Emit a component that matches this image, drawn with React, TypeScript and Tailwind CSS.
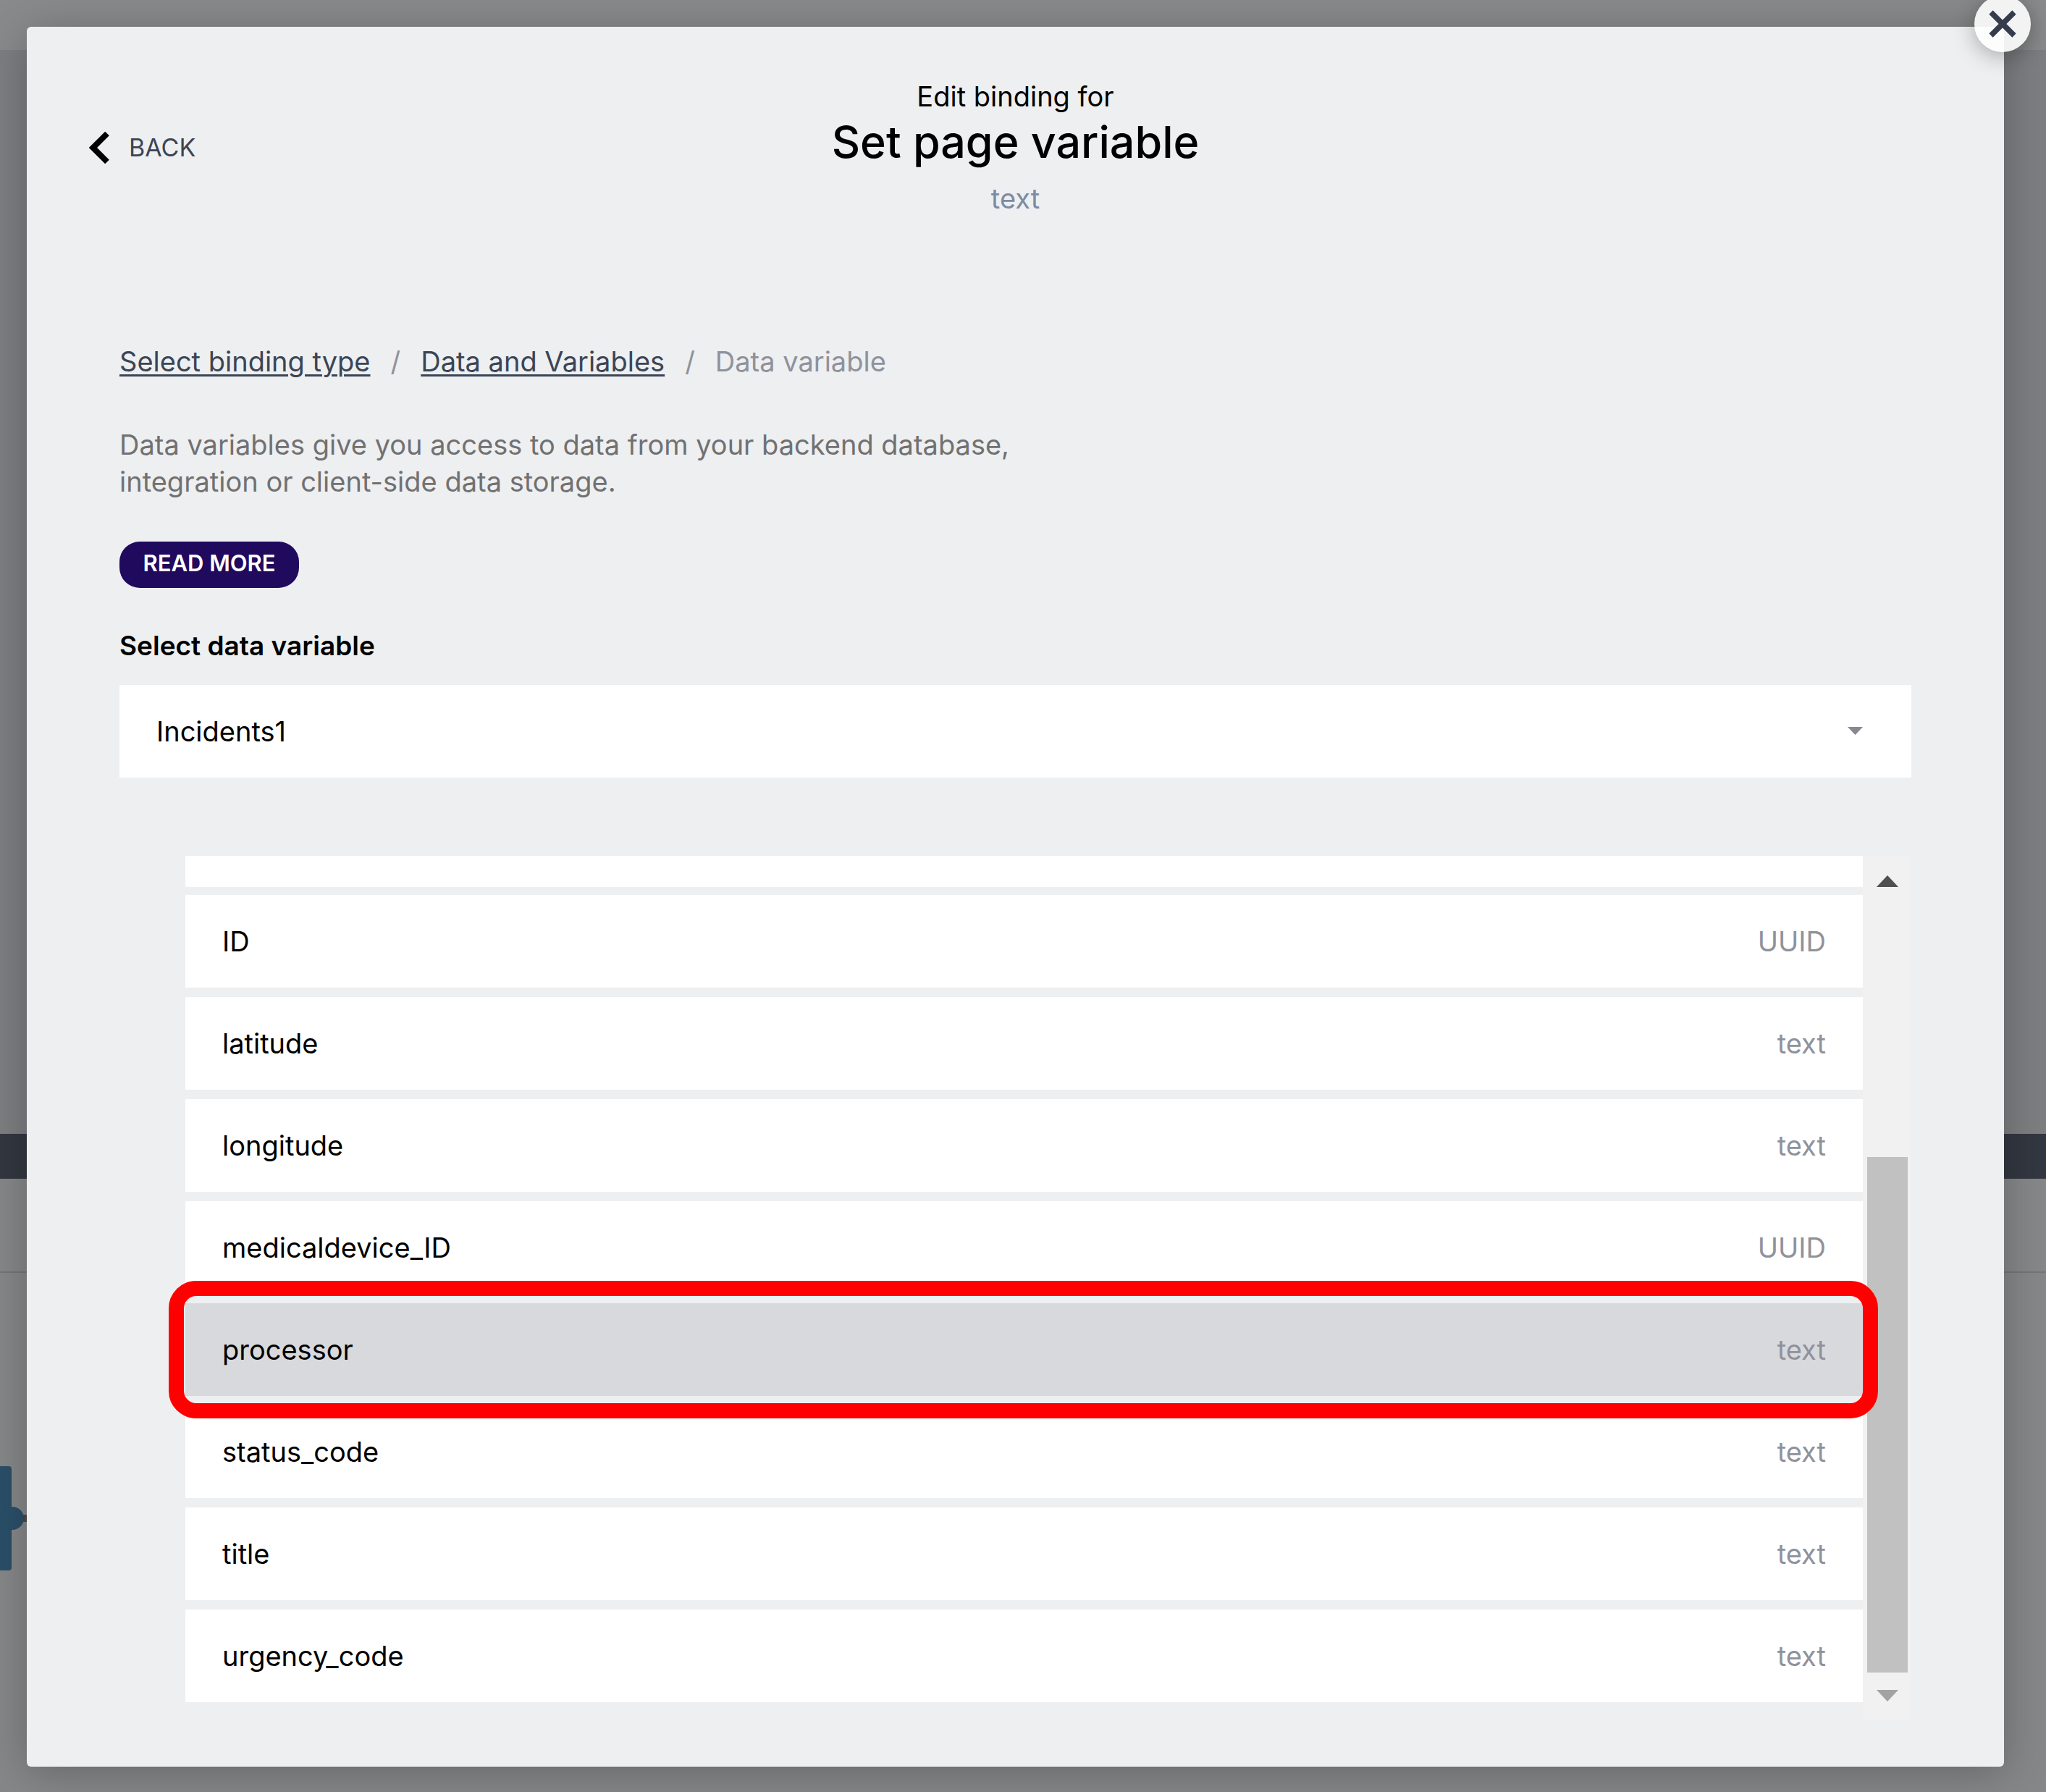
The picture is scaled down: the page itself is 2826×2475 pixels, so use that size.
type Field = { name: string; type: string; highlighted?: boolean };

const fields: Field[] = [
  { name: "ID", type: "UUID" },
  { name: "latitude", type: "text" },
  { name: "longitude", type: "text" },
  { name: "medicaldevice_ID", type: "UUID" },
  { name: "processor", type: "text", highlighted: true },
  { name: "status_code", type: "text" },
  { name: "title", type: "text" },
  { name: "urgency_code", type: "text" },
];

function Backdrop() {
  return (
    <div className="absolute inset-0 flex flex-col bg-[#868788]" aria-hidden="true">
      <div className="h-[69px] bg-[#888a8b]" />
      <div className="h-[1497px] bg-[#7d7e81]" />
      <div className="h-[62px] bg-[#323741]" />
      <div className="h-[130px] border-b-2 border-[#747577]" />
      <svg className="mt-[267px] h-36 w-10" viewBox="0 0 40 144">
        <rect x="30" y="67" width="10" height="10" fill="#4a4a4a" />
        <rect x="-8" y="0" width="24" height="144" rx="4" fill="#2b4f69" />
        <circle cx="17" cy="72" r="16" fill="#2b4f69" />
      </svg>
    </div>
  );
}

function Header() {
  return (
    <header className="grid grid-cols-[1fr_auto_1fr] items-center px-[86px] pt-[71px]">
      <button type="button" className="flex items-center gap-[27px] justify-self-start text-[34px] leading-[48px] text-[#3b4555]">
        <svg className="h-[46px] w-7" viewBox="0 0 28 46" fill="none" stroke="#000" strokeWidth="8">
          <path d="M25 3.5 L5.5 23 L25 42.500" />
        </svg>
        BACK
      </button>
      <div className="text-center">
        <p className="text-[38px] leading-[51px]">Edit binding for</p>
        <h1 className="text-[61px] leading-[74px] font-medium">Set page variable</h1>
        <p className="mt-4 text-[38px] leading-[51px] text-[#7d8ba3]">text</p>
      </div>
    </header>
  );
}

function Breadcrumb() {
  return (
    <nav aria-label="Breadcrumb" className="flex gap-7 text-[38px] leading-[51px] text-[#8f929b]">
      <a href="#type" className="text-[#3b4555] underline decoration-3 underline-offset-4">Select binding type</a>
      <span>/</span>
      <a href="#data" className="text-[#3b4555] underline decoration-3 underline-offset-4">Data and Variables</a>
      <span>/</span>
      <span aria-current="page">Data variable</span>
    </nav>
  );
}

function FieldRow({ field }: { field: Field }) {
  return (
    <li className="relative">
      <button
        type="button"
        className={
          field.highlighted
            ? "flex h-32 w-full items-center justify-between bg-[#d8d9dd] px-[51px]"
            : "flex h-32 w-full items-center justify-between bg-white px-[51px]"
        }
      >
        <span>{field.name}</span>
        <span className="text-[#8f929b]">{field.type}</span>
      </button>
      {field.highlighted && (
        <div className="pointer-events-none absolute -top-[31px] -right-[21px] -bottom-[31px] -left-[23px] z-10 rounded-[38px] border-[21px] border-[#ff0000]" />
      )}
    </li>
  );
}

function Scrollbar() {
  return (
    <div className="flex w-[67px] flex-col items-center bg-[#f1f1f1] pt-[27px] pb-[25px]" aria-hidden="true">
      <svg className="h-4 w-[30px]" viewBox="0 0 30 16">
        <path d="M15 0 L30 16 H0 Z" fill="#505050" />
      </svg>
      <div className="mt-[373px] mb-6 w-14 flex-1 bg-[#c1c1c1]" />
      <svg className="h-4 w-[30px]" viewBox="0 0 30 16">
        <path d="M0 0 H30 L15 16 Z" fill="#a3a3a3" />
      </svg>
    </div>
  );
}

export default function App() {
  return (
    <div className="relative min-h-screen overflow-hidden pt-[37px] pr-[58px] pb-[35px] pl-[37px] font-['Inter',sans-serif] text-[38px] leading-[51px] text-black">
      <Backdrop />
      <div
        role="dialog"
        aria-label="Edit binding"
        className="relative rounded-md bg-[#eeeff1] pb-[65px] shadow-[0_8px_60px_rgba(0,0,0,0.25)]"
      >
        <Header />
        <main className="mt-[174px] px-32">
          <Breadcrumb />
          <p className="mt-16 max-w-[1300px] text-[#717171]">
            Data variables give you access to data from your backend database, integration or client-side data storage.
          </p>
          <button
            type="button"
            className="mt-[57px] block h-16 w-[248px] rounded-[28px] bg-[#1f0a5e] text-[31px] leading-[60px] font-semibold text-white"
          >
            <span className="block h-16">READ MORE</span>
          </button>
          <label htmlFor="data-variable" className="mt-[54px] block text-[37px] font-semibold">
            Select data variable
          </label>
          <div className="relative mt-[29px]">
            <select id="data-variable" className="h-32 w-full appearance-none bg-white px-[51px]">
              <option>Incidents1</option>
            </select>
            <svg className="pointer-events-none absolute top-[58px] right-[67px] h-[11px] w-[21px]" viewBox="0 0 21 11">
              <path d="M0 0 H21 L10.500 11 Z" fill="#858992" />
            </svg>
          </div>
          <div className="mt-27 flex pl-[91px]">
            <div className="flex-1 pb-6">
              <div className="mb-[11px] h-[43px] bg-white" />
              <ul className="flex flex-col gap-[13px]">
                {fields.map((field) => (
                  <FieldRow key={field.name} field={field} />
                ))}
              </ul>
            </div>
            <Scrollbar />
          </div>
        </main>
        <button
          type="button"
          aria-label="Close"
          className="absolute -top-[43px] -right-[37px] flex size-[78px] items-center justify-center rounded-full bg-white/90 shadow-[0_6px_30px_rgba(0,0,0,0.3)]"
        >
          <svg className="size-[38px]" viewBox="0 0 38 38" fill="none" stroke="#363c4b" strokeWidth="7.500">
            <path d="M3 3 L35 35 M35 3 L3 35" />
          </svg>
        </button>
      </div>
    </div>
  );
}
